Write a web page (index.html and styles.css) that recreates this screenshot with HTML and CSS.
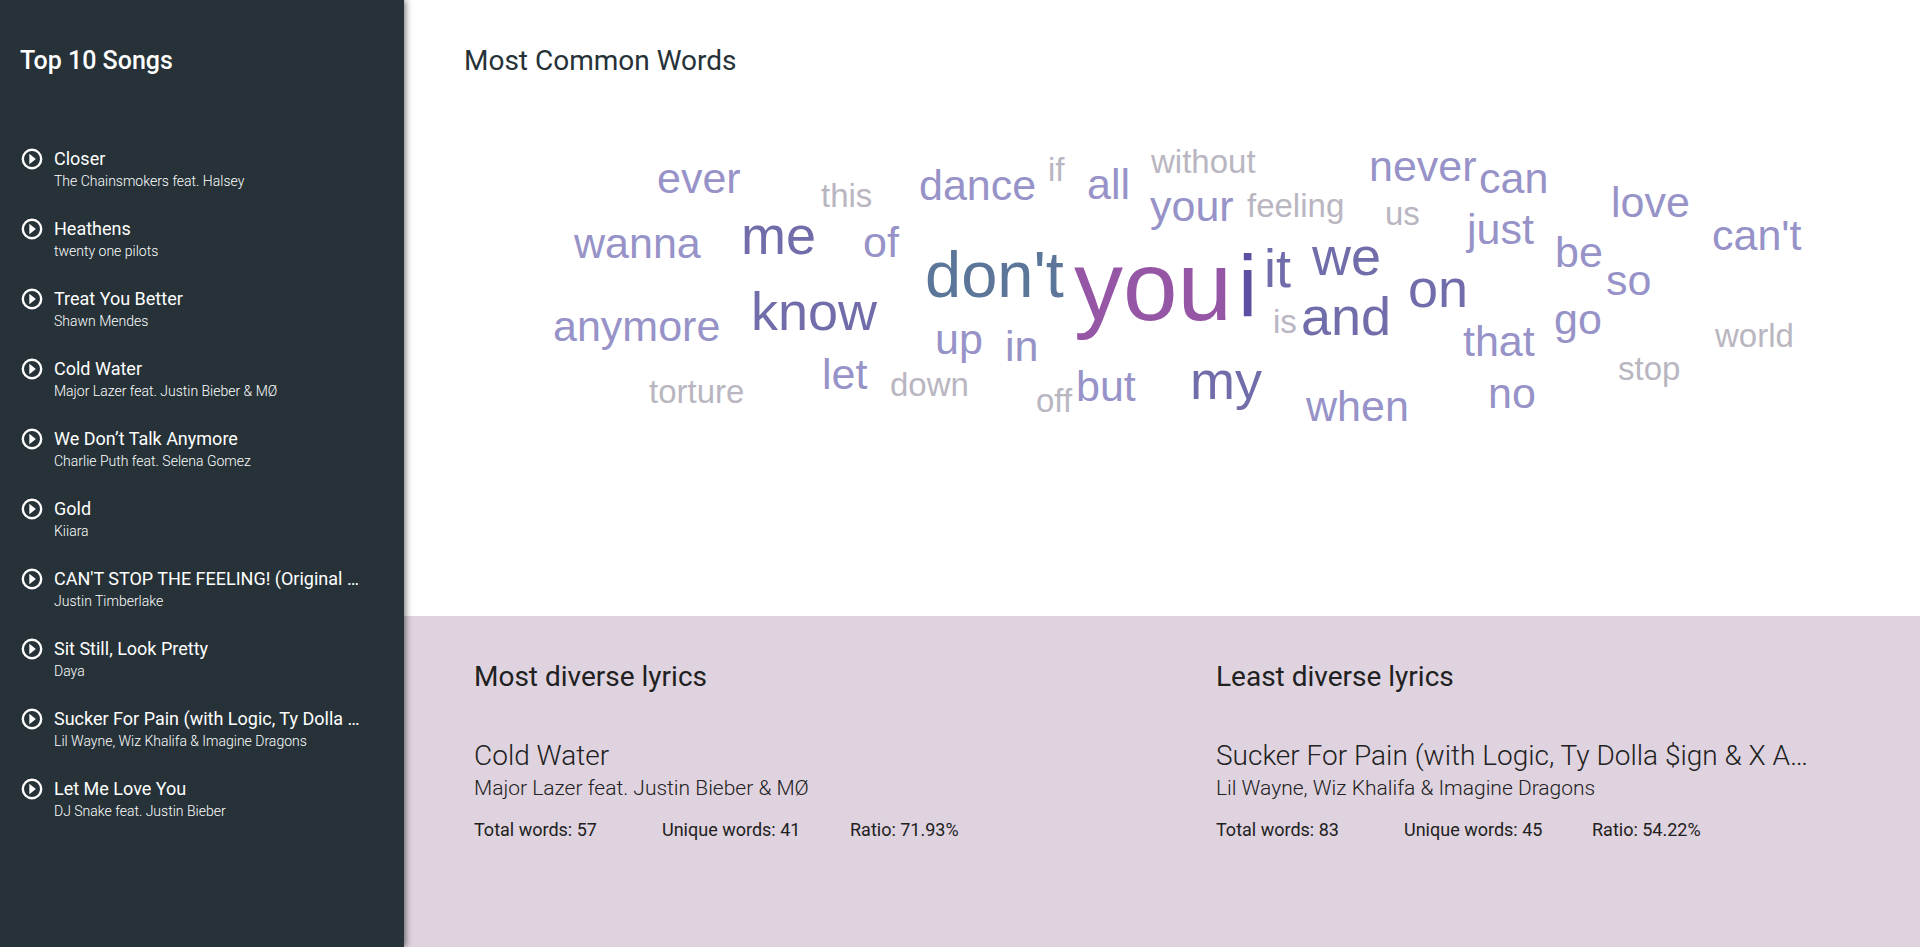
FILE: index.html
```html
<!DOCTYPE html>
<html lang="en">
<head>
<meta charset="utf-8">
<title>Top 10 Songs</title>
<link rel="stylesheet" href="styles.css">
</head>
<body>
<svg class="sprite" aria-hidden="true">
  <symbol id="play" viewBox="0 0 22 22">
    <circle cx="11" cy="11" r="9.2" fill="none" stroke="currentColor" stroke-width="2.4"/>
    <path d="M8.3 5.8v10.4l6.6-5.2z" fill="currentColor"/>
  </symbol>
</svg>
<div class="app">
  <aside class="sidebar">
    <h1 class="sidebar-title">Top 10 Songs</h1>
    <ol class="songs">
      <li class="song"><button class="play" aria-label="Play Closer"><svg class="play-icon"><use href="#play"/></svg></button><div class="song-text"><div class="song-name">Closer</div><div class="song-artist">The Chainsmokers feat. Halsey</div></div></li>
      <li class="song"><button class="play" aria-label="Play Heathens"><svg class="play-icon"><use href="#play"/></svg></button><div class="song-text"><div class="song-name">Heathens</div><div class="song-artist">twenty one pilots</div></div></li>
      <li class="song"><button class="play" aria-label="Play Treat You Better"><svg class="play-icon"><use href="#play"/></svg></button><div class="song-text"><div class="song-name">Treat You Better</div><div class="song-artist">Shawn Mendes</div></div></li>
      <li class="song"><button class="play" aria-label="Play Cold Water"><svg class="play-icon"><use href="#play"/></svg></button><div class="song-text"><div class="song-name">Cold Water</div><div class="song-artist">Major Lazer feat. Justin Bieber &amp; MØ</div></div></li>
      <li class="song"><button class="play" aria-label="Play We Don’t Talk Anymore"><svg class="play-icon"><use href="#play"/></svg></button><div class="song-text"><div class="song-name">We Don’t Talk Anymore</div><div class="song-artist">Charlie Puth feat. Selena Gomez</div></div></li>
      <li class="song"><button class="play" aria-label="Play Gold"><svg class="play-icon"><use href="#play"/></svg></button><div class="song-text"><div class="song-name">Gold</div><div class="song-artist">Kiiara</div></div></li>
      <li class="song"><button class="play" aria-label="Play CAN'T STOP THE FEELING!"><svg class="play-icon"><use href="#play"/></svg></button><div class="song-text"><div class="song-name">CAN'T STOP THE FEELING! (Original Song)</div><div class="song-artist">Justin Timberlake</div></div></li>
      <li class="song"><button class="play" aria-label="Play Sit Still, Look Pretty"><svg class="play-icon"><use href="#play"/></svg></button><div class="song-text"><div class="song-name">Sit Still, Look Pretty</div><div class="song-artist">Daya</div></div></li>
      <li class="song"><button class="play" aria-label="Play Sucker For Pain"><svg class="play-icon"><use href="#play"/></svg></button><div class="song-text"><div class="song-name">Sucker For Pain (with Logic, Ty Dolla $ign &amp; X Ambassadors)</div><div class="song-artist">Lil Wayne, Wiz Khalifa &amp; Imagine Dragons</div></div></li>
      <li class="song"><button class="play" aria-label="Play Let Me Love You"><svg class="play-icon"><use href="#play"/></svg></button><div class="song-text"><div class="song-name">Let Me Love You</div><div class="song-artist">DJ Snake feat. Justin Bieber</div></div></li>
    </ol>
  </aside>
  <main class="main">
    <section class="words">
      <h2 class="words-title">Most Common Words</h2>
      <ul class="cloud">
        <li class="word w2" style="--x:-505;--y:116">ever</li>
        <li class="word w1" style="--x:-341;--y:130">this</li>
        <li class="word w2" style="--x:-588;--y:181">wanna</li>
        <li class="word w3" style="--x:-421;--y:177">me</li>
        <li class="word w2" style="--x:-299;--y:180">of</li>
        <li class="word w2" style="--x:-609;--y:264">anymore</li>
        <li class="word w3" style="--x:-411;--y:253">know</li>
        <li class="word w2" style="--x:-340;--y:312">let</li>
        <li class="word w1" style="--x:-513;--y:326">torture</li>
        <li class="word w1" style="--x:-272;--y:319">down</li>
        <li class="word w2" style="--x:-243;--y:123">dance</li>
        <li class="word w1" style="--x:-114;--y:104">if</li>
        <li class="word w2" style="--x:-75;--y:122">all</li>
        <li class="word w1" style="--x:-11;--y:96">without</li>
        <li class="word w2" style="--x:-12;--y:144">your</li>
        <li class="word w1" style="--x:85;--y:140">feeling</li>
        <li class="word w2" style="--x:207;--y:104">never</li>
        <li class="word w1" style="--x:223;--y:148">us</li>
        <li class="word w4" style="--x:-237;--y:220">don't</li>
        <li class="word w6" style="--x:-88;--y:243">you</li>
        <li class="word w5" style="--x:76;--y:239">i</li>
        <li class="word w3" style="--x:102;--y:210">it</li>
        <li class="word w3" style="--x:150;--y:198">we</li>
        <li class="word w1" style="--x:111;--y:256">is</li>
        <li class="word w3" style="--x:139;--y:258">and</li>
        <li class="word w2" style="--x:-227;--y:277">up</li>
        <li class="word w2" style="--x:-157;--y:284">in</li>
        <li class="word w1" style="--x:-126;--y:335">off</li>
        <li class="word w2" style="--x:-86;--y:324">but</li>
        <li class="word w3" style="--x:28;--y:322">my</li>
        <li class="word w2" style="--x:144;--y:344">when</li>
        <li class="word w2" style="--x:317;--y:116">can</li>
        <li class="word w2" style="--x:449;--y:140">love</li>
        <li class="word w2" style="--x:305;--y:167">just</li>
        <li class="word w2" style="--x:550;--y:173">can't</li>
        <li class="word w2" style="--x:393;--y:190">be</li>
        <li class="word w3" style="--x:246;--y:230">on</li>
        <li class="word w2" style="--x:444;--y:218">so</li>
        <li class="word w2" style="--x:392;--y:257">go</li>
        <li class="word w2" style="--x:301;--y:279">that</li>
        <li class="word w2" style="--x:326;--y:331">no</li>
        <li class="word w1" style="--x:553;--y:270">world</li>
        <li class="word w1" style="--x:456;--y:303">stop</li>
      </ul>
    </section>
    <section class="lyrics">
      <article class="lyric">
        <h2 class="lyric-title">Most diverse lyrics</h2>
        <h3 class="lyric-song">Cold Water</h3>
        <p class="lyric-artist">Major Lazer feat. Justin Bieber &amp; MØ</p>
        <div class="stats"><span>Total words: 57</span><span>Unique words: 41</span><span>Ratio: 71.93%</span></div>
      </article>
      <article class="lyric">
        <h2 class="lyric-title">Least diverse lyrics</h2>
        <h3 class="lyric-song">Sucker For Pain (with Logic, Ty Dolla $ign &amp; X Ambassadors)</h3>
        <p class="lyric-artist">Lil Wayne, Wiz Khalifa &amp; Imagine Dragons</p>
        <div class="stats"><span>Total words: 83</span><span>Unique words: 45</span><span>Ratio: 54.22%</span></div>
      </article>
    </section>
  </main>
</div>
</body>
</html>
```
FILE: styles.css
```css
* { box-sizing: border-box; }
body { margin: 0; font-family: Roboto, "Liberation Sans", sans-serif; color: #212121; background: #fff; }
h1, h2, h3, p, ul, ol { margin: 0; padding: 0; }
ul, ol { list-style: none; }
.sprite { position: absolute; width: 0; height: 0; }

.app { display: flex; min-height: 100vh; }

.sidebar {
  position: relative;
  z-index: 1;
  flex: 0 0 404px;
  min-width: 0;
  padding: 45px 20px 0;
  background: #263238;
  color: #fff;
  box-shadow: 2px 0 6px rgba(0, 0, 0, 0.5);
}
.sidebar-title { font-size: 25px; line-height: 32px; font-weight: 500; }
.songs { display: grid; grid-template-columns: minmax(0, 1fr); gap: 26px; margin-top: 70px; }
.song { display: flex; align-items: flex-start; gap: 11px; min-width: 0; }
.play { flex: none; width: 22px; height: 22px; margin: 1px 0 0 1px; padding: 0; border: 0; background: none; color: #fff; cursor: pointer; }
.play-icon { display: block; width: 22px; height: 22px; }
.song-text { flex: 1; min-width: 0; padding-right: 24px; }
.song-name { font-size: 18px; line-height: 24px; font-weight: 400; white-space: nowrap; overflow: hidden; text-overflow: ellipsis; }
.song-artist { font-size: 14px; line-height: 20px; font-weight: 300; }

.main { flex: 1; min-width: 0; display: grid; grid-template-rows: 65fr 35fr; }
.words { padding-top: 45px; }
.words-title { padding-left: 60px; font-size: 28px; line-height: 32px; font-weight: 400; color: #263238; }

.cloud { position: relative; height: 400px; font-family: "Liberation Sans", Arial, sans-serif; line-height: 1; }
.word { position: absolute; left: calc(50% + var(--x) * 1px); top: calc(var(--y) * 1px); white-space: nowrap; }
/* the negative margin puts each word's baseline on its y coordinate */
.w1 { font-size: 33px; margin-top: -28px; color: #b9b6c1; }
.w2 { font-size: 43px; margin-top: -36px; color: #9793c8; }
.w3 { font-size: 54px; margin-top: -46px; color: #716daa; }
.w4 { font-size: 65px; margin-top: -55px; color: #5b7699; }
.w5 { font-size: 87px; margin-top: -74px; color: #5e4fa2; }
.w6 { font-size: 98px; margin-top: -83px; color: #9656a6; }

.lyrics { display: grid; grid-template-columns: repeat(2, minmax(0, 1fr)); gap: 38px; padding: 45px 0 44px 70px; background: #dfd3df; }
.lyric-title { font-size: 28px; line-height: 32px; font-weight: 400; }
.lyric-song { width: 85%; margin-top: 47px; font-size: 28px; line-height: 32px; font-weight: 300; white-space: nowrap; overflow: hidden; text-overflow: ellipsis; }
.lyric-artist { margin-top: 4px; font-size: 21px; line-height: 24px; font-weight: 300; }
.stats { display: grid; grid-template-columns: repeat(3, 188px); margin-top: 18px; font-size: 18px; line-height: 24px; }
```
